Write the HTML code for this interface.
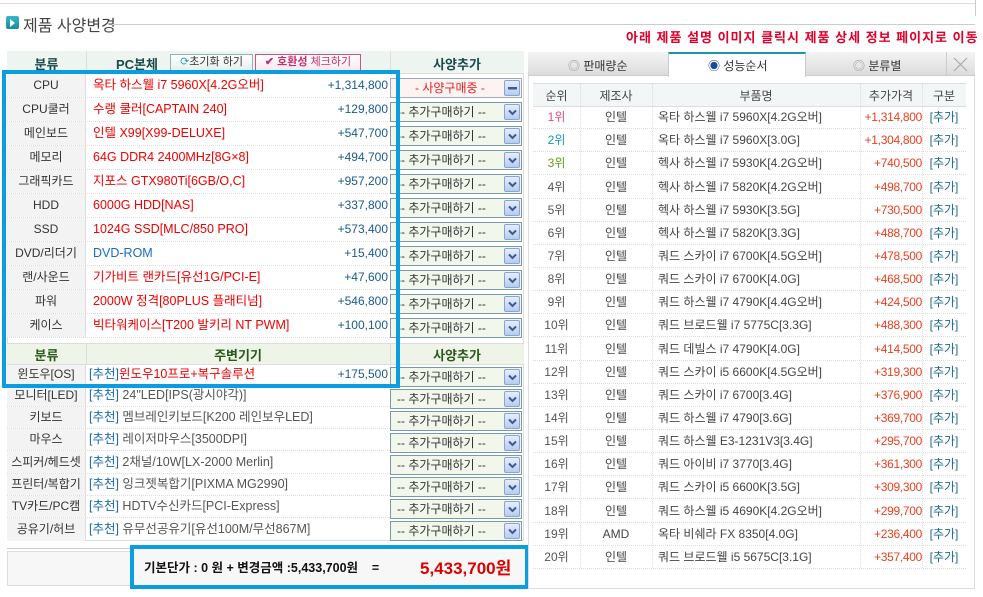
<!DOCTYPE html>
<html><head><meta charset="utf-8"><style>
*{margin:0;padding:0;box-sizing:border-box}
body{width:983px;height:597px;background:#fff;font-family:"Liberation Sans","Noto Sans CJK KR","NanumGothic",sans-serif;font-size:12px;color:#333;position:relative;overflow:hidden}
.a{position:absolute;white-space:nowrap}
.row{position:absolute;left:7px;width:517px;border-bottom:1px dotted #ddd;white-space:nowrap}
.row .c1{position:absolute;left:0;width:79px;top:0;bottom:0;background:#f3f3f3;border-right:1px solid #ddd;text-align:center;color:#333}
.row .c2{position:absolute;left:86px;top:0;color:#e00;font-size:12.5px}
.row .pr{position:absolute;right:136px;top:0;color:#1a5a8a}
.sel{position:absolute;left:390px;width:132px;height:20px;border:1px solid #7a9aaa;background:#f2f7ec;font-size:12px;color:#333;white-space:nowrap;overflow:hidden}
.sel .t{position:absolute;left:6px;top:1px;line-height:17px}
.sel .b{position:absolute;right:1px;top:1px;width:16px;height:16px;background:linear-gradient(#e6eefc,#b8cbf0);border:1px solid #8aa2d6;border-radius:2px}
.sel .b svg{position:absolute;left:3px;top:4px}
.rec{color:#1a6ab0}
.r{position:absolute;left:533px;width:433px;height:23px;border-bottom:1px dotted #ddd;line-height:23px;white-space:nowrap}
.r span{position:absolute;top:0}
.r .n{left:0;width:47px;text-align:center;color:#555}
.r .m{left:47px;width:72px;text-align:center;color:#444}
.r .p{left:125px;color:#444}
.r .pp{left:327px;width:62px;text-align:right;color:#e84020;letter-spacing:-.3px}
.r .g{left:389px;width:44px;text-align:center;color:#1a6a8a}
.vl{position:absolute;width:0;border-left:1px dotted #ddd}
</style></head><body>
<div class="a" style="left:0;top:0;width:975px;height:4px;border-bottom:1px solid #ddd"></div>
<div class="a" style="left:975px;top:0;height:16px;border-left:1px solid #ccc"></div>
<div class="a" style="left:6px;top:16px;width:13px;height:13px;background:linear-gradient(#3ab6c8,#168ca0);border-radius:2px"></div>
<div class="a" style="left:10px;top:19px;width:0;height:0;border-left:5px solid #fff;border-top:4px solid transparent;border-bottom:4px solid transparent"></div>
<div class="a" style="left:23px;top:12px;font-size:16px;color:#444">제품 사양변경</div>
<div class="a" style="left:112px;top:24px;width:863px;border-top:1px solid #ccc"></div>
<div class="a" style="left:626px;top:27px;font-size:13px;color:#e0002a;font-weight:bold;letter-spacing:1px">아래 제품 설명 이미지 클릭시 제품 상세 정보 페이지로 이동</div>

<div class="a" style="left:7px;top:51px;width:517px;height:490px;border:1px solid #ddd"></div>
<div class="a" style="left:7px;top:51px;width:517px;height:23px;background:#eef5f0;border-bottom:1px solid #ddd"></div>
<div class="a" style="left:86px;top:51px;height:23px;border-left:1px solid #ddd"></div>
<div class="a" style="left:390px;top:51px;height:23px;border-left:1px solid #ddd"></div>
<div class="a" style="left:7px;top:54px;width:79px;text-align:center;font-weight:bold;font-size:13px;color:#1a4a4a">분류</div>
<div class="a" style="left:116px;top:54px;font-weight:bold;font-size:13px;color:#1a4a4a">PC본체</div>
<div class="a" style="left:170px;top:54px;width:83px;height:17px;border:1px solid #8ab8b0;background:linear-gradient(#fff,#e6f0ee);font-size:11px;color:#333;text-align:center;line-height:15px"><span style="color:#3a9aaa">⟳</span>초기화 하기</div>
<div class="a" style="left:255px;top:54px;width:106px;height:17px;border:1px solid #d0508a;background:linear-gradient(#fff,#fbe8f0);font-size:11px;color:#c03070;text-align:center;line-height:15px"><b>✔ 호환성</b> 체크하기</div>
<div class="a" style="left:390px;top:54px;width:134px;text-align:center;font-weight:bold;font-size:13px;color:#1a4a4a">사양추가</div>

<div class="row" style="top:74px;height:24px;line-height:23px"><div class="c1">CPU</div><div class="c2">옥타 하스웰 i7 5960X[4.2G오버]</div><div class="pr">+1,314,800</div></div>
<div class="row" style="top:98px;height:24px;line-height:23px"><div class="c1">CPU쿨러</div><div class="c2">수랭 쿨러[CAPTAIN 240]</div><div class="pr">+129,800</div></div>
<div class="row" style="top:122px;height:24px;line-height:23px"><div class="c1">메인보드</div><div class="c2">인텔 X99[X99-DELUXE]</div><div class="pr">+547,700</div></div>
<div class="row" style="top:146px;height:24px;line-height:23px"><div class="c1">메모리</div><div class="c2">64G DDR4 2400MHz[8G×8]</div><div class="pr">+494,700</div></div>
<div class="row" style="top:170px;height:24px;line-height:23px"><div class="c1">그래픽카드</div><div class="c2">지포스 GTX980Ti[6GB/O,C]</div><div class="pr">+957,200</div></div>
<div class="row" style="top:194px;height:24px;line-height:23px"><div class="c1">HDD</div><div class="c2">6000G HDD[NAS]</div><div class="pr">+337,800</div></div>
<div class="row" style="top:218px;height:24px;line-height:23px"><div class="c1">SSD</div><div class="c2">1024G SSD[MLC/850 PRO]</div><div class="pr">+573,400</div></div>
<div class="row" style="top:242px;height:24px;line-height:23px"><div class="c1">DVD/리더기</div><div class="c2" style="color:#1a6ac0">DVD-ROM</div><div class="pr">+15,400</div></div>
<div class="row" style="top:266px;height:24px;line-height:23px"><div class="c1">랜/사운드</div><div class="c2">기가비트 랜카드[유선1G/PCI-E]</div><div class="pr">+47,600</div></div>
<div class="row" style="top:290px;height:24px;line-height:23px"><div class="c1">파워</div><div class="c2">2000W 정격[80PLUS 플래티넘]</div><div class="pr">+546,800</div></div>
<div class="row" style="top:314px;height:24px;line-height:23px"><div class="c1">케이스</div><div class="c2">빅타워케이스[T200 발키리 NT PWM]</div><div class="pr">+100,100</div></div>

<div class="a" style="left:7px;top:343px;width:517px;height:22px;background:#eef5e8;border-top:1px solid #ddd;border-bottom:1px solid #ddd"></div>
<div class="a" style="left:86px;top:343px;height:22px;border-left:1px solid #ddd"></div>
<div class="a" style="left:390px;top:343px;height:22px;border-left:1px solid #ddd"></div>
<div class="a" style="left:7px;top:345px;width:79px;text-align:center;font-weight:bold;font-size:13px;color:#2a5a1a">분류</div>
<div class="a" style="left:86px;top:345px;width:304px;text-align:center;font-weight:bold;font-size:13px;color:#2a5a1a">주변기기</div>
<div class="a" style="left:390px;top:345px;width:134px;text-align:center;font-weight:bold;font-size:13px;color:#2a5a1a">사양추가</div>

<div class="row" style="top:365px;height:20px;line-height:19px"><div class="c1">윈도우[OS]</div><div class="c2" style="left:82px"><span class="rec">[추천]</span>윈도우10프로+복구솔루션</div><div class="pr">+175,500</div></div>
<div class="row" style="top:385px;height:22px;line-height:21px"><div class="c1">모니터[LED]</div><div class="c2" style="left:82px;color:#555"><span class="rec">[추천]</span> 24"LED[IPS(광시야각)]</div></div>
<div class="row" style="top:407px;height:22px;line-height:21px"><div class="c1">키보드</div><div class="c2" style="left:82px;color:#555"><span class="rec">[추천]</span> 멤브레인키보드[K200 레인보우LED]</div></div>
<div class="row" style="top:429px;height:22px;line-height:21px"><div class="c1">마우스</div><div class="c2" style="left:82px;color:#555"><span class="rec">[추천]</span> 레이저마우스[3500DPI]</div></div>
<div class="row" style="top:451px;height:23px;line-height:22px"><div class="c1">스피커/헤드셋</div><div class="c2" style="left:82px;color:#555"><span class="rec">[추천]</span> 2채널/10W[LX-2000 Merlin]</div></div>
<div class="row" style="top:474px;height:22px;line-height:21px"><div class="c1">프린터/복합기</div><div class="c2" style="left:82px;color:#555"><span class="rec">[추천]</span> 잉크젯복합기[PIXMA MG2990]</div></div>
<div class="row" style="top:496px;height:22px;line-height:21px"><div class="c1">TV카드/PC캠</div><div class="c2" style="left:82px;color:#555"><span class="rec">[추천]</span> HDTV수신카드[PCI-Express]</div></div>
<div class="row" style="top:518px;height:23px;line-height:22px;border-bottom:none"><div class="c1">공유기/허브</div><div class="c2" style="left:82px;color:#555"><span class="rec">[추천]</span> 유무선공유기[유선100M/무선867M]</div></div>

<div class="sel" style="top:78px;border-color:#9ab;background:#fdf4f2"><span class="t" style="left:24px;color:#e02020">- 사양구매중 -</span><span class="b"><svg width="9" height="7"><rect x="0" y="2" width="9" height="2.5" fill="#3a5a9a"/></svg></span></div>
<div class="sel" style="top:102px"><span class="t">-- 추가구매하기 --</span><span class="b"><svg width="9" height="7"><path d="M1 1.5L4.5 5L8 1.5" stroke="#3a5a9a" stroke-width="2" fill="none"/></svg></span></div>
<div class="sel" style="top:126px"><span class="t">-- 추가구매하기 --</span><span class="b"><svg width="9" height="7"><path d="M1 1.5L4.5 5L8 1.5" stroke="#3a5a9a" stroke-width="2" fill="none"/></svg></span></div>
<div class="sel" style="top:150px"><span class="t">-- 추가구매하기 --</span><span class="b"><svg width="9" height="7"><path d="M1 1.5L4.5 5L8 1.5" stroke="#3a5a9a" stroke-width="2" fill="none"/></svg></span></div>
<div class="sel" style="top:174px"><span class="t">-- 추가구매하기 --</span><span class="b"><svg width="9" height="7"><path d="M1 1.5L4.5 5L8 1.5" stroke="#3a5a9a" stroke-width="2" fill="none"/></svg></span></div>
<div class="sel" style="top:198px"><span class="t">-- 추가구매하기 --</span><span class="b"><svg width="9" height="7"><path d="M1 1.5L4.5 5L8 1.5" stroke="#3a5a9a" stroke-width="2" fill="none"/></svg></span></div>
<div class="sel" style="top:222px"><span class="t">-- 추가구매하기 --</span><span class="b"><svg width="9" height="7"><path d="M1 1.5L4.5 5L8 1.5" stroke="#3a5a9a" stroke-width="2" fill="none"/></svg></span></div>
<div class="sel" style="top:246px"><span class="t">-- 추가구매하기 --</span><span class="b"><svg width="9" height="7"><path d="M1 1.5L4.5 5L8 1.5" stroke="#3a5a9a" stroke-width="2" fill="none"/></svg></span></div>
<div class="sel" style="top:270px"><span class="t">-- 추가구매하기 --</span><span class="b"><svg width="9" height="7"><path d="M1 1.5L4.5 5L8 1.5" stroke="#3a5a9a" stroke-width="2" fill="none"/></svg></span></div>
<div class="sel" style="top:294px"><span class="t">-- 추가구매하기 --</span><span class="b"><svg width="9" height="7"><path d="M1 1.5L4.5 5L8 1.5" stroke="#3a5a9a" stroke-width="2" fill="none"/></svg></span></div>
<div class="sel" style="top:318px"><span class="t">-- 추가구매하기 --</span><span class="b"><svg width="9" height="7"><path d="M1 1.5L4.5 5L8 1.5" stroke="#3a5a9a" stroke-width="2" fill="none"/></svg></span></div>
<div class="sel" style="top:367px"><span class="t">-- 추가구매하기 --</span><span class="b"><svg width="9" height="7"><path d="M1 1.5L4.5 5L8 1.5" stroke="#3a5a9a" stroke-width="2" fill="none"/></svg></span></div>
<div class="sel" style="top:389px"><span class="t">-- 추가구매하기 --</span><span class="b"><svg width="9" height="7"><path d="M1 1.5L4.5 5L8 1.5" stroke="#3a5a9a" stroke-width="2" fill="none"/></svg></span></div>
<div class="sel" style="top:411px"><span class="t">-- 추가구매하기 --</span><span class="b"><svg width="9" height="7"><path d="M1 1.5L4.5 5L8 1.5" stroke="#3a5a9a" stroke-width="2" fill="none"/></svg></span></div>
<div class="sel" style="top:433px"><span class="t">-- 추가구매하기 --</span><span class="b"><svg width="9" height="7"><path d="M1 1.5L4.5 5L8 1.5" stroke="#3a5a9a" stroke-width="2" fill="none"/></svg></span></div>
<div class="sel" style="top:455px"><span class="t">-- 추가구매하기 --</span><span class="b"><svg width="9" height="7"><path d="M1 1.5L4.5 5L8 1.5" stroke="#3a5a9a" stroke-width="2" fill="none"/></svg></span></div>
<div class="sel" style="top:477px"><span class="t">-- 추가구매하기 --</span><span class="b"><svg width="9" height="7"><path d="M1 1.5L4.5 5L8 1.5" stroke="#3a5a9a" stroke-width="2" fill="none"/></svg></span></div>
<div class="sel" style="top:499px"><span class="t">-- 추가구매하기 --</span><span class="b"><svg width="9" height="7"><path d="M1 1.5L4.5 5L8 1.5" stroke="#3a5a9a" stroke-width="2" fill="none"/></svg></span></div>
<div class="sel" style="top:521px"><span class="t">-- 추가구매하기 --</span><span class="b"><svg width="9" height="7"><path d="M1 1.5L4.5 5L8 1.5" stroke="#3a5a9a" stroke-width="2" fill="none"/></svg></span></div>

<div class="a" style="left:7px;top:548px;width:517px;height:2px;border-top:1px solid #ccc"></div>
<div class="a" style="left:7px;top:551px;width:517px;height:35px;border:1px solid #ddd;background:#f7f7f7"></div>
<div class="a" style="left:130px;top:545px;width:399px;height:44px;border:4px solid #0a9ee0;background:#f7f7f7"></div>
<div class="a" style="left:144px;top:557px;font-size:12.5px;font-weight:bold;color:#111">기본단가 : 0 원 + 변경금액 :5,433,700원 &nbsp;&nbsp;&nbsp;=</div>
<div class="a" style="left:420px;top:554px;font-size:17px;font-weight:bold;color:#d00">5,433,700원</div>

<div class="a" style="left:2px;top:70px;width:398px;height:318px;border:4px solid #0a9ee0"></div>

<div class="a" style="left:528px;top:52px;width:447px;height:537px;border:1px solid #ddd"></div>
<div class="a" style="left:528px;top:52px;width:447px;height:24px;background:linear-gradient(#f4f4f4,#dcdcdc);border-bottom:1px solid #ccc"></div>
<div class="a" style="left:668px;top:52px;width:138px;height:25px;background:#fff;border-top:2px solid #1a9aa0;border-left:1px solid #ccc;border-right:1px solid #ccc"></div>
<div class="a" style="left:946px;top:52px;height:24px;border-left:1px solid #ccc"></div>
<div class="a" style="left:568px;top:57px;font-size:12px;color:#333"><span style="color:#999">◎</span> 판매량순</div>
<div class="a" style="left:708px;top:57px;font-size:12px;color:#333"><span style="color:#1a4a9a">◉</span> 성능순서</div>
<div class="a" style="left:853px;top:57px;font-size:12px;color:#333"><span style="color:#999">◎</span> 분류별</div>
<svg class="a" style="left:953px;top:57px" width="15" height="15"><path d="M1 1L14 14M14 1L1 14" stroke="#aaa" stroke-width="1.2"/></svg>

<div class="a" style="left:533px;top:83px;width:433px;height:24px;background:#f2f6f6;border-top:1px solid #ddd;border-bottom:1px solid #ddd"></div>
<div class="a" style="left:533px;top:87px;width:47px;text-align:center;color:#444">순위</div>
<div class="a" style="left:580px;top:87px;width:72px;text-align:center;color:#444">제조사</div>
<div class="a" style="left:652px;top:87px;width:208px;text-align:center;color:#444">부품명</div>
<div class="a" style="left:860px;top:87px;width:62px;text-align:center;color:#444">추가가격</div>
<div class="a" style="left:922px;top:87px;width:44px;text-align:center;color:#444">구분</div>
<div class="vl" style="left:580px;top:84px;height:484px"></div>
<div class="vl" style="left:652px;top:84px;height:484px"></div>
<div class="vl" style="left:860px;top:84px;height:484px"></div>
<div class="vl" style="left:922px;top:84px;height:484px"></div>

<div class="r" style="top:106px"><span class="n" style="color:#e0507a">1위</span><span class="m">인텔</span><span class="p">옥타 하스웰 i7 5960X[4.2G오버]</span><span class="pp">+1,314,800</span><span class="g">[추가]</span></div>
<div class="r" style="top:129px"><span class="n" style="color:#1a9aaa">2위</span><span class="m">인텔</span><span class="p">옥타 하스웰 i7 5960X[3.0G]</span><span class="pp">+1,304,800</span><span class="g">[추가]</span></div>
<div class="r" style="top:152px"><span class="n" style="color:#6a9a20">3위</span><span class="m">인텔</span><span class="p">헥사 하스웰 i7 5930K[4.2G오버]</span><span class="pp">+740,500</span><span class="g">[추가]</span></div>
<div class="r" style="top:176px"><span class="n">4위</span><span class="m">인텔</span><span class="p">헥사 하스웰 i7 5820K[4.2G오버]</span><span class="pp">+498,700</span><span class="g">[추가]</span></div>
<div class="r" style="top:199px"><span class="n">5위</span><span class="m">인텔</span><span class="p">헥사 하스웰 i7 5930K[3.5G]</span><span class="pp">+730,500</span><span class="g">[추가]</span></div>
<div class="r" style="top:222px"><span class="n">6위</span><span class="m">인텔</span><span class="p">헥사 하스웰 i7 5820K[3.3G]</span><span class="pp">+488,700</span><span class="g">[추가]</span></div>
<div class="r" style="top:245px"><span class="n">7위</span><span class="m">인텔</span><span class="p">쿼드 스카이 i7 6700K[4.5G오버]</span><span class="pp">+478,500</span><span class="g">[추가]</span></div>
<div class="r" style="top:268px"><span class="n">8위</span><span class="m">인텔</span><span class="p">쿼드 스카이 i7 6700K[4.0G]</span><span class="pp">+468,500</span><span class="g">[추가]</span></div>
<div class="r" style="top:291px"><span class="n">9위</span><span class="m">인텔</span><span class="p">쿼드 하스웰 i7 4790K[4.4G오버]</span><span class="pp">+424,500</span><span class="g">[추가]</span></div>
<div class="r" style="top:314px"><span class="n">10위</span><span class="m">인텔</span><span class="p">쿼드 브로드웰 i7 5775C[3.3G]</span><span class="pp">+488,300</span><span class="g">[추가]</span></div>
<div class="r" style="top:338px"><span class="n">11위</span><span class="m">인텔</span><span class="p">쿼드 데빌스 i7 4790K[4.0G]</span><span class="pp">+414,500</span><span class="g">[추가]</span></div>
<div class="r" style="top:361px"><span class="n">12위</span><span class="m">인텔</span><span class="p">쿼드 스카이 i5 6600K[4.5G오버]</span><span class="pp">+319,300</span><span class="g">[추가]</span></div>
<div class="r" style="top:384px"><span class="n">13위</span><span class="m">인텔</span><span class="p">쿼드 스카이 i7 6700[3.4G]</span><span class="pp">+376,900</span><span class="g">[추가]</span></div>
<div class="r" style="top:407px"><span class="n">14위</span><span class="m">인텔</span><span class="p">쿼드 하스웰 i7 4790[3.6G]</span><span class="pp">+369,700</span><span class="g">[추가]</span></div>
<div class="r" style="top:430px"><span class="n">15위</span><span class="m">인텔</span><span class="p">쿼드 하스웰 E3-1231V3[3.4G]</span><span class="pp">+295,700</span><span class="g">[추가]</span></div>
<div class="r" style="top:453px"><span class="n">16위</span><span class="m">인텔</span><span class="p">쿼드 아이비 i7 3770[3.4G]</span><span class="pp">+361,300</span><span class="g">[추가]</span></div>
<div class="r" style="top:476px"><span class="n">17위</span><span class="m">인텔</span><span class="p">쿼드 스카이 i5 6600K[3.5G]</span><span class="pp">+309,300</span><span class="g">[추가]</span></div>
<div class="r" style="top:500px"><span class="n">18위</span><span class="m">인텔</span><span class="p">쿼드 하스웰 i5 4690K[4.2G오버]</span><span class="pp">+299,700</span><span class="g">[추가]</span></div>
<div class="r" style="top:523px"><span class="n">19위</span><span class="m">AMD</span><span class="p">옥타 비쉐라 FX 8350[4.0G]</span><span class="pp">+236,400</span><span class="g">[추가]</span></div>
<div class="r" style="top:546px"><span class="n">20위</span><span class="m">인텔</span><span class="p">쿼드 브로드웰 i5 5675C[3.1G]</span><span class="pp">+357,400</span><span class="g">[추가]</span></div>
</body></html>
